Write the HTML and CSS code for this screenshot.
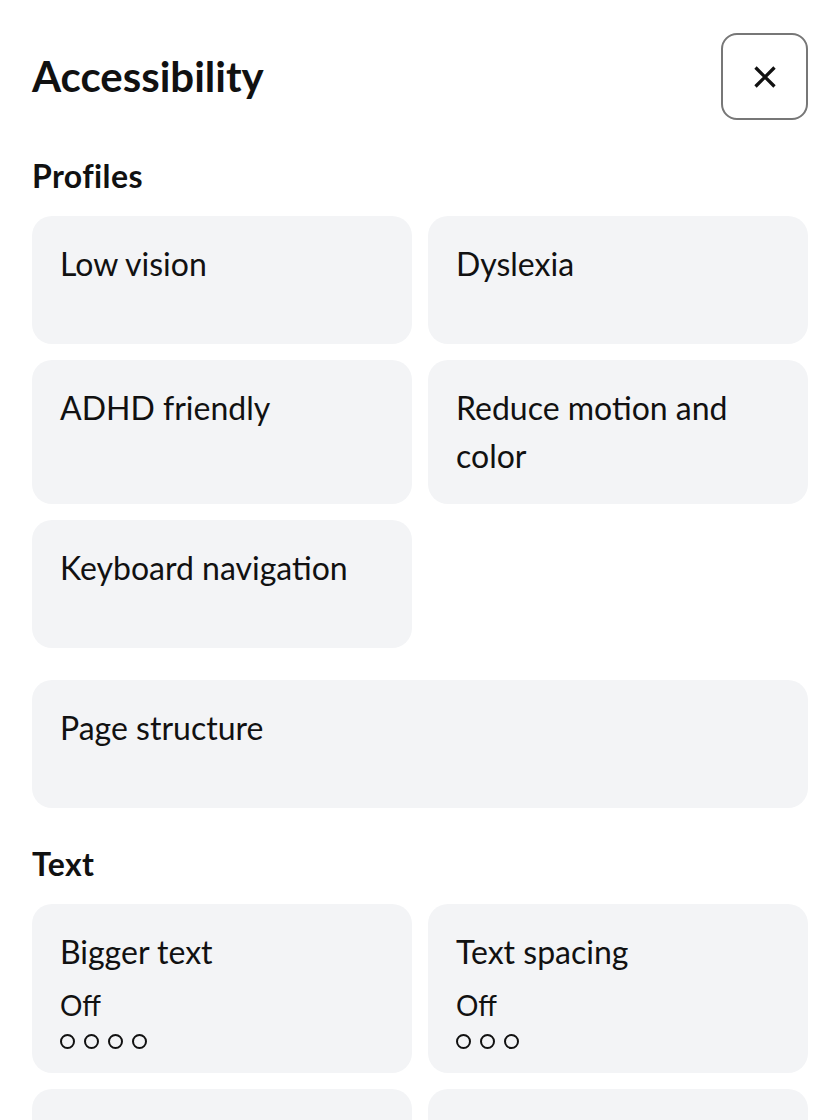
FILE: index.html
```html
<!DOCTYPE html>
<html lang="en">
<head>
<meta charset="utf-8">
<title>Accessibility</title>
<link rel="stylesheet" href="styles.css">
</head>
<body>
<div class="panel">
  <header class="header">
    <h1 class="title">Accessibility</h1>
    <button class="close" aria-label="Close">
      <svg class="close-icon" viewBox="0 0 24 24" width="38" height="38" aria-hidden="true">
        <path d="M18 6 6 18M6 6l12 12" fill="none" stroke="#111" stroke-width="2.1" stroke-linecap="butt"/>
      </svg>
    </button>
  </header>

  <section class="section">
    <h2 class="section-title">Profiles</h2>
    <div class="grid">
      <div class="card"><div class="card-title">Low vision</div></div>
      <div class="card"><div class="card-title">Dyslexia</div></div>
      <div class="card"><div class="card-title">ADHD friendly</div></div>
      <div class="card"><div class="card-title">Reduce motion and color</div></div>
      <div class="card"><div class="card-title">Keyboard navigation</div></div>
    </div>
    <div class="card card-wide"><div class="card-title">Page structure</div></div>
  </section>

  <section class="section">
    <h2 class="section-title">Text</h2>
    <div class="grid">
      <div class="card">
        <div class="card-title">Bigger text</div>
        <div class="card-state">Off</div>
        <div class="dots"><span class="dot"></span><span class="dot"></span><span class="dot"></span><span class="dot"></span></div>
      </div>
      <div class="card">
        <div class="card-title">Text spacing</div>
        <div class="card-state">Off</div>
        <div class="dots"><span class="dot"></span><span class="dot"></span><span class="dot"></span></div>
      </div>
      <div class="card">
        <div class="card-title">Line height</div>
        <div class="card-state">Off</div>
        <div class="dots"><span class="dot"></span><span class="dot"></span><span class="dot"></span></div>
      </div>
      <div class="card">
        <div class="card-title">Text align</div>
        <div class="card-state">Off</div>
        <div class="dots"><span class="dot"></span><span class="dot"></span><span class="dot"></span></div>
      </div>
    </div>
  </section>
</div>
</body>
</html>
```

FILE: styles.css
```css
html, body {
  margin: 0;
  padding: 0;
  background: #ffffff;
}

body {
  font-family: "Lato", "Open Sans", sans-serif;
  color: #111111;
}

.panel {
  padding: 33px 32px 32px;
}

.header {
  display: flex;
  justify-content: space-between;
  align-items: center;
}

.title {
  margin: 0;
  font-size: 42px;
  font-weight: 700;
  line-height: 1.2;
}

.close {
  width: 87px;
  height: 87px;
  box-sizing: border-box;
  border: 2px solid #777777;
  border-radius: 16px;
  background: #ffffff;
  padding: 0;
  display: flex;
  align-items: center;
  justify-content: center;
  cursor: pointer;
}

.close-icon {
  display: block;
}

.section {
  margin-top: 32px;
}

.section-title {
  margin: 0 0 16px;
  font-size: 32px;
  font-weight: 700;
  line-height: 48px;
  letter-spacing: 0.4px;
}

.grid {
  display: grid;
  grid-template-columns: 1fr 1fr;
  gap: 16px;
}

.card {
  box-sizing: border-box;
  min-height: 128px;
  padding: 24px 28px;
  background: #f3f4f6;
  border-radius: 20px;
}

.card-wide {
  margin-top: 32px;
}

.card-title {
  font-size: 32px;
  line-height: 48px;
}

.card-state {
  margin-top: 8px;
  font-size: 28px;
  line-height: 42px;
}

.dots {
  margin-top: 8px;
  display: flex;
  gap: 9px;
}

.dot {
  width: 15px;
  height: 15px;
  box-sizing: border-box;
  border: 2px solid #111111;
  border-radius: 50%;
}
```
